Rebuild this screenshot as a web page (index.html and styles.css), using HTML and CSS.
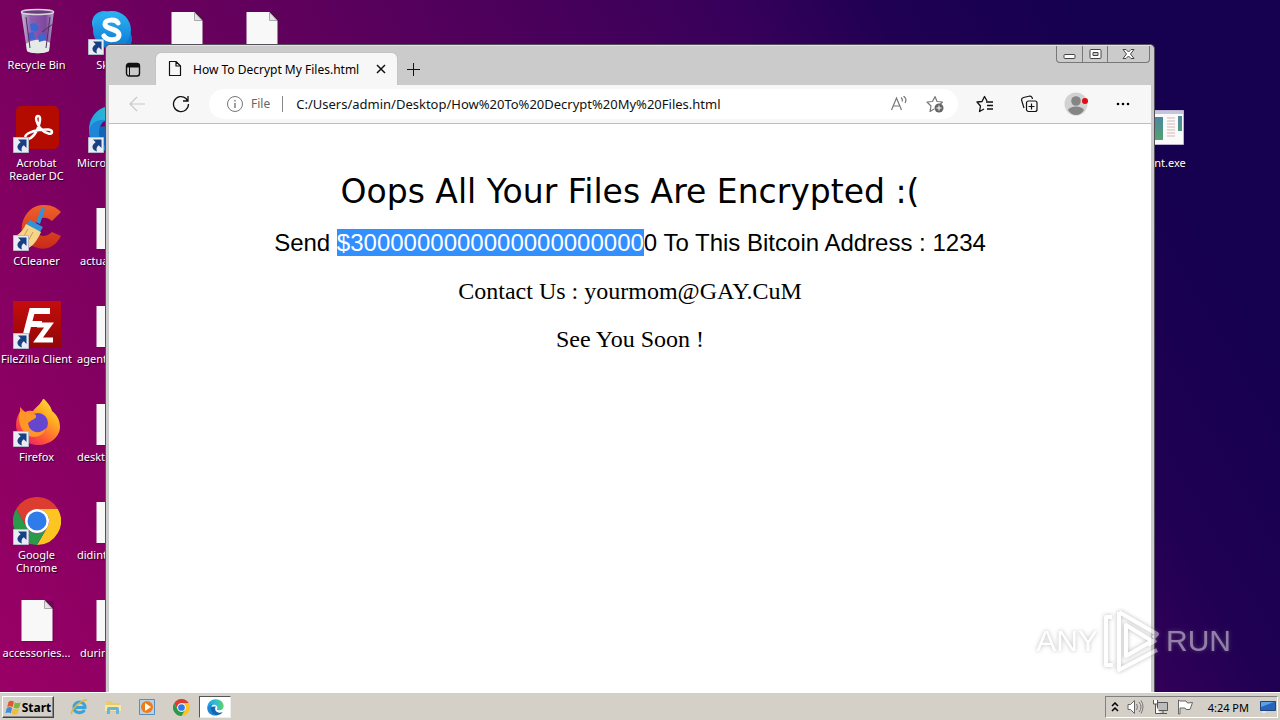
FILE: index.html
```html
<!DOCTYPE html>
<html lang="en">
<head>
<meta charset="utf-8">
<title>Desktop</title>
<link rel="stylesheet" href="styles.css">
</head>
<body>
<svg class="defs" aria-hidden="true">
  <defs>
    <linearGradient id="gsky" x1="0" y1="0" x2="0" y2="1"><stop offset="0" stop-color="#2fb4f2"/><stop offset="1" stop-color="#0a78d4"/></linearGradient>
    <linearGradient id="gfz" x1="0" y1="0" x2="0" y2="1"><stop offset="0" stop-color="#c40d0d"/><stop offset="1" stop-color="#930606"/></linearGradient>
    <linearGradient id="gcc" x1="0" y1="0" x2="0" y2="1"><stop offset="0" stop-color="#f0602c"/><stop offset="1" stop-color="#c92a17"/></linearGradient>
    <linearGradient id="gff" x1="1" y1="0" x2="0.2" y2="1"><stop offset="0" stop-color="#fff04a"/><stop offset=".35" stop-color="#ffb023"/><stop offset=".7" stop-color="#ff5a35"/><stop offset="1" stop-color="#e8186f"/></linearGradient>
    <linearGradient id="gbin" x1="0" y1="0" x2="1" y2="0"><stop offset="0" stop-color="#c9bfd6"/><stop offset=".3" stop-color="#8d5fae"/><stop offset=".75" stop-color="#7e479e"/><stop offset="1" stop-color="#b9a5c8"/></linearGradient>
    <linearGradient id="gedge" x1="0" y1="0" x2="1" y2="0"><stop offset="0" stop-color="#1fa4e4"/><stop offset=".6" stop-color="#35c1c8"/><stop offset="1" stop-color="#61d45a"/></linearGradient>
    <linearGradient id="gapp" x1="0" y1="0" x2="0" y2="1"><stop offset="0" stop-color="#4a87a0"/><stop offset="1" stop-color="#56a070"/></linearGradient>
    <symbol id="shortcut" viewBox="0 0 16 16"><path fill="#e9ecf2" stroke="#b8b9c8" d="M.5.5h15v15H.5z"/><path fill="#173f82" d="M5 2.500h8.500V11l-2.700-2.700C8.500 10 8 12 9 14.500 4 13 2.500 8.500 7.700 5.200z"/></symbol>
    <symbol id="file" viewBox="0 0 48 48"><path fill="#4c1146" opacity=".5" d="M9 6h32v41H9z"/><path fill="#f8f8f8" d="M8.500 5h23l8 9v32h-31z"/><path fill="#e4e4e4" stroke="#a9a9a9" d="M31.500 5.500v8h7.500z"/></symbol>
    <symbol id="chrome" viewBox="0 0 48 48"><path fill="#dd3d31" d="M24 12h20.800A24 24 0 0 0 3.200 12l10.400 18A12 12 0 0 1 24 12z"/><path fill="#fcc522" d="M44.800 12A24 24 0 0 1 24 48l10.400-18A12 12 0 0 0 24 12z"/><path fill="#2a9a4a" d="M3.200 12A24 24 0 0 0 24 48l10.400-18a12 12 0 0 1-20.800 0z"/><circle cx="24" cy="24" r="12" fill="#fff"/><circle cx="24" cy="24" r="9.500" fill="#2f7bea"/></symbol>
    <symbol id="edge" viewBox="0 0 48 48"><path fill="#1266b5" d="M2 22C4 34 14 47 29 46c7-1 12-4 15-9-9 4-20 1-21-8-1-4 2-8 2-8z"/><path fill="url(#gedge)" d="M1 22C3 9 12 1 24 1c14 0 23 9 23 19 0 8-6 12-12 12-5 0-8-2-7-4 4-5 0-12-9-12C11 16 4 19 1 27z"/><path fill="#1e86d8" d="M1 25c2-7 9-11 17-10-7 4-9 13-5 21 3 6 9 10 16 10C12 49 0 38 1 25z"/></symbol>
  </defs>
</svg>

<main class="desktop">
  <section class="icons" aria-label="Desktop icons">
    <figure class="item"><svg class="pic" viewBox="0 0 48 48"><path fill="url(#gbin)" d="M8 4h33l-5 40c-3 3-19 3-22 0z"/><ellipse cx="24.500" cy="5" rx="16" ry="2.500" fill="#6b3b7e" stroke="#d8d4dc" stroke-width="1.500"/><path fill="#e4ebe7" d="M13 37c5-5 18-6 24-1l-1 8c-4 3-19 3-22 0z"/><path fill="#3b66d4" d="m17 17 6-1 3 6-4 3-4-2zM15 26l6-1 1 7-6 1zM25 28l7-1 1 6-7 2z"/><path fill="none" stroke="#503060" d="m40 17-11 8M13 10l4 31M37 10l-4 31"/></svg><figcaption>Recycle Bin</figcaption></figure>
    <figure class="item"><svg class="pic" viewBox="0 0 48 48"><circle cx="16" cy="16" r="12" fill="#27a9ee"/><circle cx="32" cy="32" r="12" fill="#0a78d4"/><circle cx="24" cy="23" r="19" fill="url(#gsky)"/><path fill="none" stroke="#fff" stroke-width="5" stroke-linecap="round" d="M30 16c-2-4-13-4-13 1 0 6 14 4 14 11 0 6-12 6-15 1"/></svg><svg class="link"><use href="#shortcut"/></svg><figcaption>Skype</figcaption></figure>
    <figure class="item col3"><svg class="pic"><use href="#file"/></svg></figure>
    <figure class="item col4"><svg class="pic"><use href="#file"/></svg></figure>

    <figure class="item col1"><svg class="pic" viewBox="0 0 48 48"><rect x="3" y="1" width="43" height="43" rx="5" fill="#b30b00"/><path fill="none" stroke="#fff" stroke-width="2.500" d="M13 33c-3-3 5-7 13-8 8-1 13-1 13 2s-6 2-11-3c-4-4-7-13-3-13 5 0 0 15-5 20-3 3-6 4-7 2z"/></svg><svg class="link"><use href="#shortcut"/></svg><figcaption>Acrobat Reader DC</figcaption></figure>
    <figure class="item cut"><svg class="pic"><use href="#edge"/></svg><svg class="link"><use href="#shortcut"/></svg><figcaption>Microsoft</figcaption></figure>
    <figure class="item col16"><svg class="pic" viewBox="0 0 48 48"><path fill="#fafafa" stroke="#b9b3d0" d="M2.500 5.500h43v34h-43z"/><path fill="#c4c6dc" d="M3 6h42v3H3z"/><path fill="url(#gapp)" d="M5 12h20v23H5zM40 11h4v15h-4z"/><path stroke="#d7b5b5" d="M29 13h8M29 16h8M29 19h8M29 22h8M29 25h8M29 28h8M29 31h8"/></svg><figcaption>client.exe</figcaption></figure>

    <figure class="item col1"><svg class="pic" viewBox="0 0 48 48"><path fill="url(#gcc)" d="M48 9 39 18C31 11 22 16 22 24s9 13 17 5l9 4C42 45 32 47 25 45 13 42 7 34 9 21 12 8 22 1 32 2c7 0 12 3 16 7z"/><path fill="#2f93d8" d="m29 4 3 2-5 15-4-2zM17 17l13 7-3 5-14-7z"/><path fill="#f6d58a" d="m13 21 15 8C24 38 20 43 14 46 9 43 5 38 2 33c5-2 8-6 11-12z"/><path fill="none" stroke="#c59d4e" d="m15 26-7 12m12-9-7 13"/></svg><svg class="link"><use href="#shortcut"/></svg><figcaption>CCleaner</figcaption></figure>
    <figure class="item cut inset"><svg class="pic"><use href="#file"/></svg><figcaption>actua</figcaption></figure>

    <figure class="item col1"><svg class="pic" viewBox="0 0 48 48"><path fill="url(#gfz)" d="M0 0h48v47H0z"/><path fill="none" stroke="#fff" stroke-width="6" d="M37 10H19l-8 31M15 23h14"/><path fill="none" stroke="#fff" stroke-width="5" d="M24 24h12L25 39h15"/></svg><svg class="link"><use href="#shortcut"/></svg><figcaption>FileZilla Client</figcaption></figure>
    <figure class="item cut"><svg class="pic"><use href="#file"/></svg><figcaption>agent</figcaption></figure>

    <figure class="item col1"><svg class="pic" viewBox="0 0 48 48"><path fill="url(#gff)" d="M31 0c5 5 7 8 8 12 4 3 8 8 8 16 0 10-10 18-22 18S3 37 3 26c0-6 2-10 4-13V8l5 5c4-2 7-1 8-1 3-4 7-6 10-12z"/><circle cx="25" cy="24" r="10" fill="#6746cf"/><path fill="#ff9628" d="M7 12c5 0 10 3 14 3 4 1 2 5-2 6l-4 3c1 10 12 12 18 5-2 9-14 12-21 5C6 28 5 19 7 12z"/></svg><svg class="link"><use href="#shortcut"/></svg><figcaption>Firefox</figcaption></figure>
    <figure class="item cut"><svg class="pic"><use href="#file"/></svg><figcaption>desktop</figcaption></figure>

    <figure class="item col1"><svg class="pic"><use href="#chrome"/></svg><svg class="link"><use href="#shortcut"/></svg><figcaption>Google Chrome</figcaption></figure>
    <figure class="item cut"><svg class="pic"><use href="#file"/></svg><figcaption>didinter</figcaption></figure>

    <figure class="item col1"><svg class="pic"><use href="#file"/></svg><figcaption>accessories...</figcaption></figure>
    <figure class="item cut inset"><svg class="pic"><use href="#file"/></svg><figcaption>during</figcaption></figure>
  </section>

  <section class="window" aria-label="Browser window">
    <header class="tabstrip">
      <button class="tool tabmenu" aria-label="Tab actions"><svg width="16" height="16" viewBox="0 0 16 16"><rect x="1.500" y="1.500" width="13" height="12.500" rx="2.500" fill="none" stroke="#111" stroke-width="1.400"/><path fill="#111" d="M2 2h12v3.500H2z"/><path stroke="#111" d="M4.500 5v9"/></svg></button>
      <div class="tab">
        <svg width="14" height="18" viewBox="0 0 14 18"><path fill="none" stroke="#111" stroke-width="1.200" stroke-linejoin="round" d="M1.500 1.500h6.500l4.500 4.500v9.500h-11zM8 1.500V6h4.500"/></svg>
        <span class="tabtitle">How To Decrypt My Files.html</span>
        <button class="tool close" aria-label="Close tab"><svg width="10" height="10" viewBox="0 0 10 10"><path stroke="#111" stroke-width="1.500" d="m1 1 8 8m0-8L1 9"/></svg></button>
      </div>
      <button class="tool newtab" aria-label="New tab"><svg width="15" height="15" viewBox="0 0 15 15"><path stroke="#111" d="M7.500 1v13M1 7.500h13"/></svg></button>
      <div class="controls">
        <button aria-label="Minimize"><svg width="13" height="12" viewBox="0 0 13 12"><rect x="1" y="6.500" width="11" height="4" rx="1" fill="#fff" stroke="#444"/></svg></button>
        <button aria-label="Restore"><svg width="13" height="12" viewBox="0 0 13 12"><rect x="1" y="1.500" width="11" height="9" rx="1" fill="#fff" stroke="#444"/><path fill="#ccc" stroke="#444" d="M4 4.500h5v3H4z"/></svg></button>
        <button class="wide" aria-label="Close"><svg width="13" height="12" viewBox="0 0 13 12"><path fill="#fff" stroke="#444" d="M1 1.500h3l2.500 2.500L9 1.500h3L8.500 6l3.500 4.500H9L6.500 8 4 10.500H1L4.500 6z"/></svg></button>
      </div>
    </header>
    <nav class="toolbar">
      <button class="tool" aria-label="Back"><svg width="18" height="16" viewBox="0 0 18 16"><path fill="none" stroke="#c8c8c8" stroke-width="1.200" d="M17 8H2m7-7L2 8l7 7"/></svg></button>
      <button class="tool reload" aria-label="Refresh"><svg width="18" height="18" viewBox="0 0 18 18"><path fill="none" stroke="#111" stroke-width="1.300" d="M16.500 9A7.500 7.500 0 1 1 14 3.500l1.500 2M16 1v5h-5"/></svg></button>
      <div class="address">
        <svg width="18" height="18" viewBox="0 0 18 18"><circle cx="9" cy="9" r="7.500" fill="none" stroke="#777"/><path stroke="#777" stroke-width="1.400" d="M9 8v5M9 5v1.500"/></svg>
        <label class="scheme" for="url">File</label>
        <input id="url" type="text" value="C:/Users/admin/Desktop/How%20To%20Decrypt%20My%20Files.html">
        <button class="tool" aria-label="Read aloud"><svg width="18" height="16" viewBox="0 0 18 16"><path fill="none" stroke="#777" stroke-width="1.200" d="M1.500 14 6.500 2l5 12M3.500 10h6M11 1.500q2 1.500 1 4M13.500 0q4 3 1.500 7"/></svg></button>
        <button class="tool" aria-label="Add to favorites"><svg width="18" height="18" viewBox="0 0 18 18"><path fill="none" stroke="#777" stroke-width="1.200" stroke-linejoin="round" d="m9 1.500 2 5 5.500.5-3 3M9 1.500l-2.500 5L1 7l4 4-1 5.500L8 14"/><circle cx="13" cy="13" r="4.500" fill="#666"/><path stroke="#fff" d="M13 10.500v5M10.500 13h5"/></svg></button>
      </div>
      <button class="tool" aria-label="Favorites"><svg width="18" height="18" viewBox="0 0 18 18"><path fill="none" stroke="#111" stroke-width="1.300" stroke-linejoin="round" d="M11 6 8.500 1.500 6 6.500l-5 .5 3.500 4-1 5.500L8 14"/><path stroke="#111" stroke-width="1.300" d="M10 7h7M11 10.500h6M11 14h6"/></svg></button>
      <button class="tool" aria-label="Collections"><svg width="18" height="18" viewBox="0 0 18 18"><rect x="6.500" y="6" width="10.500" height="10.500" rx="2" fill="none" stroke="#111" stroke-width="1.200"/><path fill="none" stroke="#111" stroke-width="1.200" d="M11.500 8.500v6M8.500 11.500h6M4 13 1.500 5q0-2 2-2.500L10 1q2 0 2.500 3"/></svg></button>
      <button class="tool" aria-label="Profile"><svg width="26" height="24" viewBox="0 0 26 24"><circle cx="12" cy="12" r="11.500" fill="#d2d2d2"/><circle cx="12" cy="9" r="4.800" fill="#858585"/><path fill="#858585" d="M4 18q2-3.500 8-3.500t8 3.500q-3 5-8 5t-8-5z"/><circle cx="21" cy="9" r="3" fill="#e00b12"/></svg></button>
      <button class="tool" aria-label="Settings and more"><svg width="14" height="4" viewBox="0 0 14 4"><circle cx="2" cy="2" r="1.300"/><circle cx="7" cy="2" r="1.300"/><circle cx="12" cy="2" r="1.300"/></svg></button>
    </nav>
    <article class="page">
      <h1>Oops All Your Files Are Encrypted :(</h1>
      <p class="sans">Send <mark>$3000000000000000000000</mark>0 To This Bitcoin Address : 1234</p>
      <p>Contact Us : yourmom@GAY.CuM</p>
      <p>See You Soon !</p>
    </article>
  </section>

  <div class="watermark">
    <span>ANY</span>
    <svg width="60" height="64" viewBox="0 0 60 64"><path fill="none" stroke="#fff" stroke-width="4" stroke-linejoin="round" d="M10 8H4v48h7M17 3v58l38-20M17 3l38 22-4 4M24 16v31l26-15zM46 36l8-5"/></svg>
    <span>RUN</span>
  </div>
</main>

<footer class="taskbar">
  <button class="start"><svg width="17" height="17" viewBox="0 0 19 17"><path fill="#e4572e" d="M4 2q3-2 6 0L8.500 8q-3-2-6 0z"/><path fill="#7db63b" d="M11 2.500q3 2 6.500 0L16 8.500q-3 2-6.500 0z"/><path fill="#3f8bd5" d="M2 9q3-2 6 0l-1.500 6q-3-2-6 0z"/><path fill="#f5bd2c" d="M9 9.500q3 2 6.500 0L14 15.500q-3 2-6.500 0z"/></svg>Start</button>
  <div class="launch">
    <button aria-label="Internet Explorer"><svg width="18" height="18" viewBox="0 0 18 18"><path fill="none" stroke="#3ba3dc" stroke-width="3" d="M4 9.500h11C15 2 4 2.500 4 9.500c0 6 8 6.500 10.500 2.500"/><path fill="none" stroke="#e5b62f" stroke-width="1.500" d="M2 16C-1 13 12 1 17 2"/></svg></button>
    <button aria-label="Explorer"><svg width="18" height="18" viewBox="0 0 18 18"><path fill="#eacb6c" d="M2 3h6l1 2h7v9H2z"/><path fill="#f8e7a2" d="M1 7h16v6H1z"/><path fill="#67b5dc" d="M3 11q0-2 2-2h8q2 0 2 2v5h-3v-4H6v4H3z"/></svg></button>
    <button aria-label="Media Player"><svg width="18" height="18" viewBox="0 0 18 18"><path fill="#b6d3ed" stroke="#5c8cbc" d="M1.500 1.500h15v15h-15z"/><circle cx="9" cy="9" r="6" fill="#f07c13"/><path fill="#fff" d="m7 5 6 4-6 4z"/></svg></button>
    <button aria-label="Chrome"><svg width="17" height="17"><use href="#chrome"/></svg></button>
    <button class="active" aria-label="Edge"><svg width="17" height="17"><use href="#edge"/></svg></button>
  </div>
  <div class="tray">
    <svg width="8" height="10" viewBox="0 0 8 10"><path fill="none" stroke="#000" stroke-width="1.500" d="m1 4 3-3 3 3M1 9l3-3 3 3"/></svg>
    <svg width="17" height="16" viewBox="0 0 17 16"><path fill="#fff" stroke="#666" d="M1 5.500h2.500l4-4v13l-4-4H1z"/><path fill="none" stroke="#777" d="M9.500 5q2 3 0 6M12 3q4 5 0 10M14 1.500q4 6 0 13"/></svg>
    <svg width="17" height="16" viewBox="0 0 17 16"><path fill="#bbb" stroke="#555" d="M5.500 3.500h10v8h-10zM8 14.500h7M11 12v2"/><path fill="#fff" stroke="#555" d="M1.500 1v4h4V1M3.500 5v9.500H8"/></svg>
    <svg width="17" height="16" viewBox="0 0 17 16"><path fill="#fff" stroke="#666" d="M1.500 1v14h1.500V9h5l1 1.500h4l2.500-7-5 .5-1.500-2h-6z"/></svg>
    <time>4:24 PM</time>
    <svg width="16" height="14" viewBox="0 0 16 14"><path fill="#2765bd" stroke="#24457c" d="M.5 1.500h15v9H.5z"/><path fill="#5ba1e8" d="M1 2h13L1 7z"/><path fill="#dce8f5" d="M2 11h4v2H2z"/></svg>
  </div>
</footer>
</body>
</html>
```
FILE: styles.css
```css
* { box-sizing: border-box; }

body {
  margin: 0;
  height: 100vh;
  display: flex;
  flex-direction: column;
  overflow: hidden;
  font-family: "Noto Sans", "Open Sans", sans-serif;
  font-size: 11px;
  background: linear-gradient(60deg, #9c0066 0%, #78005f 25%, #55005c 48%, #36005a 68%, #200053 76%, #160050 88%);
}

button {
  margin: 0;
  padding: 0;
  border: 0;
  background: none;
  font: inherit;
  color: #000;
  display: flex;
  align-items: center;
  justify-content: center;
}

svg { display: block; flex: none; }
.defs { position: absolute; width: 0; height: 0; }

.desktop { flex: 1; min-height: 0; position: relative; }

.icons {
  display: grid;
  grid-template-columns: repeat(16, 75px);
  grid-auto-rows: 98px;
  margin-left: -1px;
}

.item {
  margin: 0;
  padding-top: 7px;
  position: relative;
  display: flex;
  flex-direction: column;
  align-items: center;
  gap: 3px;
  color: #fff;
  line-height: 13px;
  text-align: center;
}

.item figcaption { text-shadow: 1px 1px 1px #200020; }
.pic { width: 48px; height: 48px; }
.link { position: absolute; left: 14px; top: 39px; width: 16px; height: 16px; }
.col1 { grid-column: 1; }
.col3 { grid-column: 3; }
.col4 { grid-column: 4; }
.col16 { grid-column: 16; }
.cut figcaption { align-self: flex-start; padding-left: 3px; }
.inset figcaption { padding-left: 6px; }

.window {
  position: absolute;
  inset: 44px 125px 0 105px;
  display: flex;
  flex-direction: column;
  padding: 0 3px;
  border: 1px solid #55505c;
  border-bottom: 0;
  border-radius: 5px 5px 0 0;
  background: #cbcbcb;
}

.tabstrip { display: flex; align-items: flex-end; height: 40px; border-top: 1px solid #e2e2e2; }
.tool { height: 24px; }
.tabmenu { width: 47px; height: 30px; }

.tab {
  display: flex;
  align-items: center;
  width: 241px;
  height: 32px;
  padding: 0 11px 0 12px;
  gap: 11px;
  border-radius: 5px 5px 0 0;
  background: #f7f7f7;
  box-shadow: 0 0 1px #888;
  font-size: 12px;
}

.tabtitle { flex: 1; white-space: nowrap; }
.newtab { width: 33px; height: 32px; }

.controls {
  display: flex;
  align-self: flex-start;
  margin-left: auto;
  margin-right: 1px;
  height: 17px;
  border: 1px solid #777;
  border-top: 0;
  border-radius: 0 0 4px 4px;
}

.controls button { width: 25px; }
.controls button + button { border-left: 1px solid #777; }
.controls .wide { width: 42px; }

.toolbar {
  display: flex;
  align-items: center;
  gap: 26px;
  height: 39px;
  padding: 0 21px 0 19px;
  background: #f7f7f7;
  border-bottom: 1px solid #bdbdbd;
}

.reload { margin-right: -7px; }

.address {
  flex: 1;
  min-width: 0;
  display: flex;
  align-items: center;
  height: 30px;
  margin-right: -8px;
  padding: 0 14px 0 17px;
  border-radius: 15px;
  background: #fff;
  font-size: 13px;
}

.address .tool + .tool { margin-left: 18px; }

.scheme {
  margin: 0 13px 0 7px;
  padding-right: 12px;
  border-right: 1px solid #888;
  color: #666;
  line-height: 16px;
  font-size: 12px;
}

.address input {
  flex: 1;
  min-width: 0;
  padding: 0;
  border: 0;
  outline: 0;
  background: none;
  font: inherit;
  color: #111;
}

.page {
  flex: 1;
  padding-top: 48px;
  background: #fff;
  text-align: center;
  font: 24px/28px "Liberation Serif", serif;
  color: #000;
}

.page h1 { margin: 0 0 17px; font: 33px/40px "DejaVu Sans", sans-serif; }
.page p { margin: 0 0 20px; }
.page .sans { font-family: "Liberation Sans", sans-serif; }
.page mark { background: #318fff; color: #fff; }

.watermark {
  position: absolute;
  right: 49px;
  bottom: 19px;
  display: flex;
  align-items: center;
  gap: 4px;
  opacity: 0.5;
  color: #fff;
  font: 30px/64px "Liberation Sans", sans-serif;
  filter: drop-shadow(0 0 2px #777);
}

.taskbar {
  display: flex;
  align-items: center;
  height: 28px;
  padding: 1px 2px 0;
  background: #d4cfc7;
  border-top: 1px solid #fff;
  color: #000;
}

.start {
  width: 52px;
  height: 22px;
  border: 1px solid #fff;
  border-right-color: #444;
  border-bottom-color: #444;
  box-shadow: inset -1px -1px #888;
  background: #d4cfc7;
  font-size: 12px;
  font-weight: 700;
}

.launch { display: flex; gap: 2px; margin-left: 9px; }
.launch button { width: 32px; height: 22px; }
.launch .active {
  background: #fff;
  border: 1px solid #555;
  border-right-color: #eee;
  border-bottom-color: #eee;
}

.tray {
  display: flex;
  align-items: center;
  gap: 8px;
  height: 22px;
  margin-left: auto;
  padding: 0 1px 0 5px;
  border: 1px solid #808080;
  border-right-color: #fff;
  border-bottom-color: #fff;
}

.tray time { margin: 0 3px 0 6px; }
```
